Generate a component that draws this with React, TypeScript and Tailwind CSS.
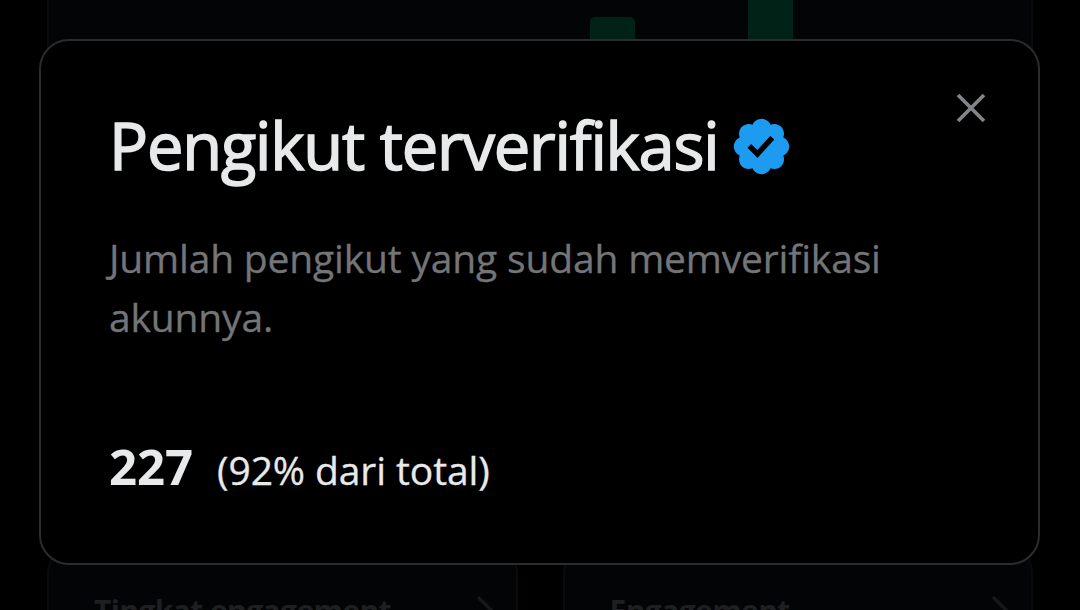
const BADGE_PATH =
  "M20.396 11c-.018-.646-.215-1.275-.57-1.816-.354-.54-.852-.972-1.438-1.246.223-.607.27-1.264.14-1.897-.131-.634-.437-1.218-.882-1.687-.47-.445-1.053-.75-1.687-.882-.633-.13-1.29-.083-1.897.14-.273-.587-.704-1.086-1.245-1.44S11.647 1.62 11 1.604c-.646.017-1.273.213-1.813.568s-.969.854-1.24 1.44c-.608-.223-1.267-.272-1.902-.14-.635.13-1.22.436-1.69.882-.445.47-.749 1.055-.878 1.688-.13.633-.08 1.29.144 1.896-.587.274-1.087.705-1.443 1.245-.356.54-.555 1.17-.574 1.817.02.647.218 1.276.574 1.817.356.54.856.972 1.443 1.245-.224.606-.274 1.263-.144 1.896.13.634.433 1.218.877 1.688.47.443 1.054.747 1.687.878.633.132 1.29.084 1.897-.136.274.586.705 1.084 1.246 1.439.54.354 1.17.551 1.816.569.647-.016 1.276-.213 1.817-.567s.972-.854 1.245-1.44c.604.239 1.266.296 1.903.164.636-.132 1.22-.447 1.68-.907.46-.46.776-1.044.908-1.681s.075-1.299-.165-1.903c.586-.274 1.084-.705 1.439-1.246.354-.54.551-1.17.569-1.816zM9.662 14.85l-3.429-3.428 1.293-1.302 2.072 2.072 4.4-4.794 1.347 1.246z";

function VerifiedBadge() {
  return (
    <svg viewBox="0 0 22 22" className="mt-[9px] h-[65px] w-[65px] shrink-0" fill="#1d9bf0">
      <path d={BADGE_PATH} />
    </svg>
  );
}

function MetricCard({ title }: { title: string }) {
  return (
    <div className="flex h-[200px] flex-1 items-start justify-between rounded-[28px] border-2 border-[#0a0c0c] bg-[#030406] pt-[44px] pr-[20px] pl-[45px]">
      <span className="text-[30px] leading-[40px] font-bold tracking-[-0.6px] whitespace-nowrap text-[#1e1f20]">{title}</span>
      <svg viewBox="0 0 20 30" className="mt-[4px] h-[30px] w-[20px]" fill="none" stroke="#17181a" strokeWidth="3.5">
        <path d="M2 2l13 13L2 28" />
      </svg>
    </div>
  );
}

function Dashboard() {
  return (
    <div className="flex h-[610px] flex-col overflow-hidden px-[47px]">
      <div className="flex h-[500px] shrink-0 items-start border-x-2 border-[#0a0c0c] bg-[#030406] pl-[541px]">
        <div className="mt-[17px] h-[200px] w-[45px] rounded-t-[5px] bg-[#002217]" />
        <div className="ml-[113px] h-[200px] w-[45px] bg-[#002217]" />
      </div>
      <div className="mt-[45px] flex shrink-0 gap-[45px]">
        <MetricCard title="Tingkat engagement" />
        <MetricCard title="Engagement" />
      </div>
    </div>
  );
}

function VerifiedFollowersDialog() {
  return (
    <section
      role="dialog"
      className="absolute top-[39px] left-[39px] h-[526px] w-[1001px] rounded-[30px] border-2 border-[#2a2c2e] bg-black pt-[64px] pl-[68px]"
    >
      <div className="flex items-start">
        <h1 className="w-[620px] text-[65px] leading-[80px] font-medium tracking-[-1.17px] whitespace-nowrap text-[#e7e9ea] [-webkit-text-stroke:1.5px_#e7e9ea]">
          Pengikut terverifikasi
        </h1>
        <VerifiedBadge />
      </div>
      <p className="mt-[43px] text-[39px] leading-[59px] tracking-[-0.17px] text-[#737578] [-webkit-text-stroke:0.3px_#737578]">
        Jumlah pengikut yang sudah memverifikasi
        <br />
        akunnya.
      </p>
      <div className="mt-[90px] flex items-baseline gap-[24px] leading-[60px] whitespace-nowrap text-[#e7e9ea]">
        <strong className="text-[49px] font-bold">227</strong>
        <span className="text-[39px] tracking-[-0.1px] [-webkit-text-stroke:0.3px_#e7e9ea]">(92% dari total)</span>
      </div>
      <button aria-label="Tutup" className="absolute top-[51px] right-[51px]">
        <svg viewBox="0 0 32 32" className="h-[32px] w-[32px]" fill="none" stroke="#838487" strokeWidth="3.7">
          <path d="M3 3l26 26M29 3L3 29" />
        </svg>
      </button>
    </section>
  );
}

export default function App() {
  return (
    <main className="relative h-[610px] w-[1080px] overflow-hidden bg-black font-['Open_Sans',sans-serif]">
      <Dashboard />
      <VerifiedFollowersDialog />
    </main>
  );
}
